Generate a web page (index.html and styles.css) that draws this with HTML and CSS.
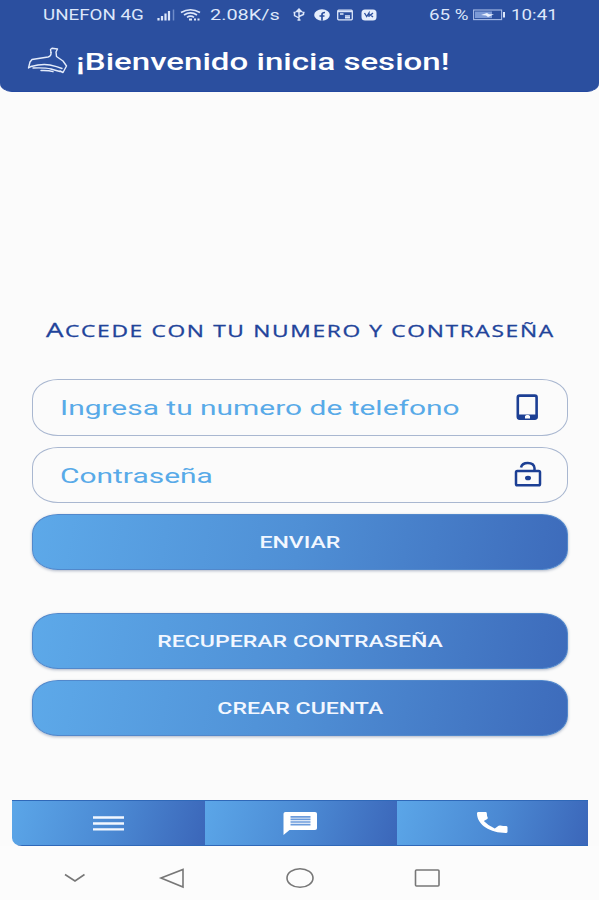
FILE: index.html
```html
<!DOCTYPE html>
<html lang="es">
<head>
  <meta charset="UTF-8">
  <title>Inicia sesion</title>
  <link rel="stylesheet" href="styles.css">
</head>
<body>

  <header class="header">
    <div class="status-bar">
      <div class="carrier"><span class="wide">UNEFON 4G</span></div>
      <svg class="signal" width="18" height="14" viewBox="0 0 18 14">
        <path d="M1.500 10v2.500M5 8v4.500M8.500 5.500v7M12 3v9.500" stroke="#dde7fa" stroke-width="2.200"/>
        <path d="M16.500 1.500v11" stroke="#6f8cc9" stroke-width="1.500"/>
      </svg>
      <svg class="wifi" width="21" height="14" viewBox="0 0 21 14" fill="none" stroke="#dde7fa" stroke-width="1.700">
        <path d="M1 4.500Q10.500-1 20 4.500M4 7q6.500-4.300 13 0M7 9.400q3.500-2.400 7 0"/>
        <path d="M9 11.500h3M14 11.500h2M17.500 11.500h2" stroke-width="2.200"/>
      </svg>
      <div class="speed"><span class="wide">2.08K/s</span></div>
      <div class="notifications">
        <svg width="14" height="14" viewBox="0 0 14 14" fill="none" stroke="#dde7fa" stroke-width="1.400">
          <path d="M7 2v10M2.500 5v2.500L7 10M11.500 4.500v2L7 8.500"/>
          <path d="M4.500 3.500L7 1l2.500 2.500zM1.500 4.500h2M10.500 4.500h2M5.500 12h3" fill="#dde7fa"/>
        </svg>
        <svg width="16" height="14" viewBox="0 0 16 14">
          <ellipse cx="8" cy="7" rx="7.800" ry="5.700" fill="#e6eefc"/>
          <path d="M8 12.700V6.500q0-2 3-2M5.500 8h5" fill="none" stroke="#2b4f9e" stroke-width="1.700"/>
        </svg>
        <svg width="16" height="14" viewBox="0 0 16 14">
          <rect x=".7" y="2.200" width="14.600" height="9.600" rx="1" fill="none" stroke="#dde7fa" stroke-width="1.300"/>
          <path d="M1 3.500h14M3 6h3.500M8 8h5M8 9.800h5" stroke="#dde7fa" stroke-width="1.500"/>
        </svg>
        <svg width="16" height="14" viewBox="0 0 16 14">
          <rect x=".5" y="1.500" width="15" height="11" rx="3.500" fill="#e6eefc"/>
          <path d="M3.500 5l2.200 3.500L8 5v4M8 7h1.500l2.500-2M9.500 7l2.500 2" fill="none" stroke="#2b4f9e" stroke-width="1.300"/>
        </svg>
      </div>
      <div class="percent"><span class="wide">65 %</span></div>
      <svg class="battery" width="33" height="14" viewBox="0 0 33 14">
        <rect x=".6" y="2" width="28" height="9.600" fill="none" stroke="#a8bce6" stroke-width="1.100"/>
        <rect x="2" y="3.500" width="17" height="6.600" fill="#7c9ad6"/>
        <path d="M8 7l6-2 2 1.200h5L15 9l-2-1.500z" fill="#eef4ff"/>
        <path d="M31 4v5.500" stroke="#dde7fa" stroke-width="2"/>
      </svg>
      <div class="clock"><span class="wide">10:41</span></div>
    </div>

    <div class="title-bar">
      <svg class="logo" width="42" height="28" viewBox="0 0 42 28" fill="none" stroke="#e4ecfb" stroke-width="1.400" stroke-linecap="round" stroke-linejoin="round">
        <path d="M24 5.500l-.5-3 1.500-1.200 5.500.7-1.500 3 .5 4.500 6.500 4.500 3.500 5-3.500 6.500-3-1.500"/>
        <path d="M24 5.500q.5 3.500-3 4.500L5 12.500 3 15 1.500 21 4 19.500"/>
        <path d="M4 19.500q11-3 19-1.500 7 1.500 12 3.500M6 21q12-.5 18 1 4 1.300 9 2.500M14 23.500q8-.3 12 1.200"/>
      </svg>
      <h1 class="title">¡Bienvenido inicia sesion!</h1>
    </div>
  </header>

  <main class="content">
    <div class="heading"><h2 class="heading-text">Accede con tu numero y contraseña</h2></div>

    <form class="login">
      <div class="field">
        <input class="field-input" type="tel" placeholder="Ingresa tu numero de telefono">
        <svg width="30" height="30" viewBox="0 0 30 30">
          <rect x="5.800" y="3.600" width="18.800" height="23" rx="1.800" fill="none" stroke="#1c3f94" stroke-width="2.600"/>
          <path d="M5 22.500h20.500v4H5z" fill="#1c3f94"/>
          <path d="M13 24l1.500-1h2l1.500 1v2.500h-5z" fill="#fcfcfc"/>
        </svg>
      </div>
      <div class="field">
        <input class="field-input" type="password" placeholder="Contraseña">
        <svg width="30" height="30" viewBox="0 0 30 30" fill="none" stroke="#1c3f94" stroke-width="2.500">
          <rect x="4" y="11" width="24" height="14.300" rx="1.300"/>
          <path d="M9 7.500Q10 3 15.800 3 22 3 22.500 8v3"/>
          <ellipse cx="16" cy="18" rx="3" ry="2.300" fill="#1c3f94" stroke="none"/>
        </svg>
      </div>
      <button class="btn" type="button"><span class="btn-text">ENVIAR</span></button>
    </form>

    <div class="links">
      <button class="btn" type="button"><span class="btn-text">RECUPERAR CONTRASEÑA</span></button>
      <button class="btn" type="button"><span class="btn-text">CREAR CUENTA</span></button>
    </div>
  </main>

  <nav class="tabs">
    <a class="tab">
      <svg width="36" height="26" viewBox="0 0 36 26"><path d="M2 7.500h31M2 13.500h31M2 19.300h31" stroke="#f2f7ff" stroke-width="2.300"/></svg>
    </a>
    <a class="tab">
      <svg width="36" height="26" viewBox="0 0 36 26">
        <path d="M2.500 2h29.500q2 0 2 1.700v14.600q0 1.700-2 1.700H6.500l-6 5V3.700Q.5 2 2.500 2z" fill="#fff"/>
        <path d="M7.500 6.800h20M7.500 9.400h20M7.500 12h20M7.500 14.600h20" stroke="#6b9bdc" stroke-width="1.700"/>
      </svg>
    </a>
    <a class="tab">
      <svg width="36" height="26" viewBox="0 0 36 26">
        <path d="M3.500 2h7q1.300 0 1.300 1.200 0 2.500.9 4.400.3.800-.4 1.400L8.800 11q4.500 4.800 11 7.500l3.800-2.700q.8-.5 1.800-.3 2.800.6 5.500.6 1.600 0 1.600 1.200v4.400q0 1.200-1.600 1.200C15.500 22.900 2 15 2 3.200Q2 2 3.500 2z" fill="#fff"/>
      </svg>
    </a>
  </nav>

  <footer class="system-nav">
    <svg width="32" height="24" viewBox="0 0 32 24"><path d="M6 8.500l10 6.500 9.500-6.500"/></svg>
    <svg width="32" height="24" viewBox="0 0 32 24"><path d="M6 12L28 3.500v17.500z"/></svg>
    <svg width="32" height="24" viewBox="0 0 32 24"><ellipse cx="16" cy="12" rx="13" ry="9.300"/></svg>
    <svg width="32" height="24" viewBox="0 0 32 24"><rect x="4.500" y="4" width="23.500" height="16" rx="1"/></svg>
  </footer>

</body>
</html>
```
FILE: styles.css
```css
* {
  box-sizing: border-box;
}

body {
  margin: 0;
  height: 900px;
  display: flex;
  flex-direction: column;
  font-family: Roboto, "Liberation Sans", sans-serif;
  background: #fbfbfb;
  overflow: hidden;
}

svg {
  display: block;
  flex: none;
}

/* header */
.header {
  height: 92px;
  flex: none;
  background: #2b4f9f;
  border-bottom: 1px solid #2348a0;
  border-radius: 0 0 12px 12px / 0 0 9px 9px;
  color: #fff;
}

.status-bar {
  height: 30px;
  padding-left: 43px;
  display: flex;
  align-items: center;
  font-size: 14px;
  color: #dde7fa;
  white-space: nowrap;
}

.wide {
  display: inline-block;
  transform: scaleX(1.34);
  transform-origin: left;
}

.carrier {
  width: 114px;
}

.wifi {
  margin-left: 5px;
}

.speed {
  width: 70px;
  margin-left: 9px;
}

.speed .wide {
  transform: scaleX(1.42);
}

.notifications {
  width: 85px;
  margin-left: 12px;
  display: flex;
  justify-content: space-between;
}

.percent {
  width: 44px;
  margin-left: 52px;
}

.clock {
  margin-left: 5px;
}

.title-bar {
  height: 62px;
  padding: 0 0 0 27px;
  display: flex;
  align-items: center;
  gap: 7px;
}

.title {
  margin: 2px 0 0;
  font-size: 23px;
  font-weight: 500;
  white-space: nowrap;
  transform: scaleX(1.437);
  transform-origin: left;
}

/* login */
.content {
  height: 708px;
  padding: 222px 31px 0 32px;
  flex: none;
}

.heading {
  height: 32px;
  margin-bottom: 33px;
  display: flex;
  justify-content: center;
  align-items: center;
}

.heading-text {
  margin: 0;
  font-family: "Open Sans", sans-serif;
  font-size: 16.500px;
  font-weight: 400;
  line-height: 32px;
  letter-spacing: 1.2px;
  text-transform: uppercase;
  white-space: nowrap;
  color: #21439a;
  -webkit-text-stroke: 0.3px #21439a;
  transform: scaleX(1.38);
}

.heading-text::first-letter {
  font-size: 20px;
}

.login {
  display: flex;
  flex-direction: column;
  gap: 11px;
}

.field {
  height: 56.500px;
  padding: 0 25px 0 27px;
  display: flex;
  align-items: center;
  justify-content: space-between;
  border: 1px solid #a9b7d0;
  border-radius: 26px / 20px;
}

.field-input {
  width: 310px;
  margin: 0;
  padding: 2px 0 0;
  border: 0;
  outline: 0;
  background: none;
  font: 400 21px Roboto, sans-serif;
  transform: scaleX(1.425);
  transform-origin: left;
}

.field-input::placeholder {
  color: #58aae8;
}

.btn {
  width: 100%;
  height: 56px;
  padding: 0;
  border: 1px solid #5288cb;
  border-radius: 26px / 20px;
  background: linear-gradient(100deg, #5da9e9 0%, #4f8fd5 50%, #3d6bbb 100%) border-box;
  box-shadow: 0 1px 3px rgba(60, 80, 120, 0.4);
  color: #f2f7ff;
  font: 500 16.500px Roboto, sans-serif;
}

.btn-text {
  display: inline-block;
  transform: scaleX(1.4);
}

.links {
  margin-top: 43px;
  display: flex;
  flex-direction: column;
  gap: 11px;
}

/* bottom tabs */
.tabs {
  height: 46px;
  margin: 0 11px 0 12px;
  flex: none;
  display: grid;
  grid-template-columns: 193px 192px 1fr;
  border-radius: 0 0 0 10px / 0 0 0 8px;
  overflow: hidden;
}

.tab {
  display: flex;
  align-items: center;
  justify-content: center;
  border: 1px solid #2f68b8;
  border-width: 1px 0;
  background: linear-gradient(105deg, #5ba6e8 0%, #4b89d3 52%, #3b66b9 100%);
}

.system-nav {
  flex: 1;
  padding: 9px 0 0 59px;
  display: grid;
  grid-template-columns: 96px 129px 127px 32px;
  align-items: center;
  background: #fcfcfc;
}

.system-nav path,
.system-nav ellipse,
.system-nav rect {
  fill: none;
  stroke: #777;
  stroke-width: 1.600;
}
```
